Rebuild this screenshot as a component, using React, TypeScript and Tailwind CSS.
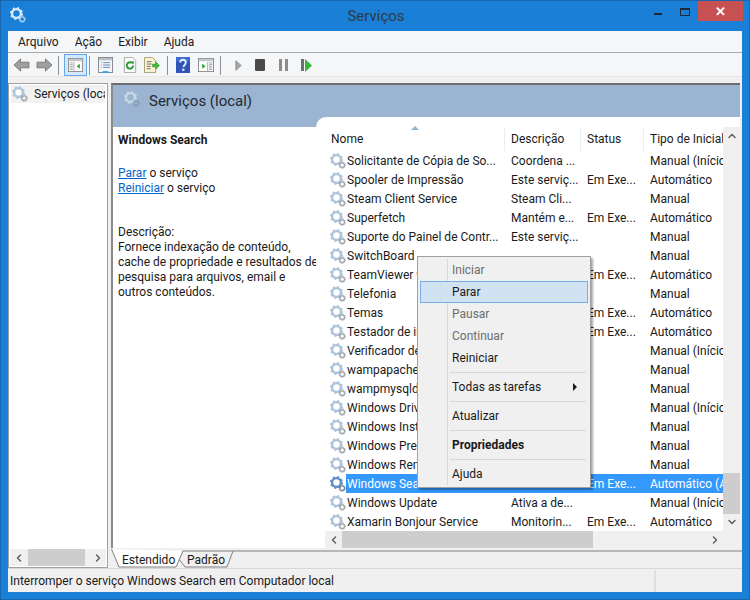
import { ChevronLeft, ChevronRight, ChevronUp, ChevronDown } from "lucide-react";

type Row = { name: string; desc?: string; status?: string; type: string; selected?: boolean };

const ROWS: Row[] = [
  { name: "Solicitante de Cópia de So...", desc: "Coordena ...", type: "Manual (Início" },
  { name: "Spooler de Impressão", desc: "Este serviç...", status: "Em Exe...", type: "Automático" },
  { name: "Steam Client Service", desc: "Steam Cli...", type: "Manual" },
  { name: "Superfetch", desc: "Mantém e...", status: "Em Exe...", type: "Automático" },
  { name: "Suporte do Painel de Contr...", desc: "Este serviç...", type: "Manual" },
  { name: "SwitchBoard", type: "Manual" },
  { name: "TeamViewer 9", status: "Em Exe...", type: "Automático" },
  { name: "Telefonia", type: "Manual" },
  { name: "Temas", status: "Em Exe...", type: "Automático" },
  { name: "Testador de instrumentação", status: "Em Exe...", type: "Automático" },
  { name: "Verificador de pontos", type: "Manual (Início" },
  { name: "wampapache", type: "Manual" },
  { name: "wampmysqld", type: "Manual" },
  { name: "Windows Driver Foundation", type: "Manual (Início" },
  { name: "Windows Installer", type: "Manual" },
  { name: "Windows Presentation", type: "Manual" },
  { name: "Windows Remote", type: "Manual" },
  { name: "Windows Search", status: "Em Exe...", type: "Automático (A", selected: true },
  { name: "Windows Update", desc: "Ativa a de...", type: "Manual (Início" },
  { name: "Xamarin Bonjour Service", desc: "Monitorin...", status: "Em Exe...", type: "Automático" },
];

function Gear({ size = 16, main = "#adc4db", inner = "#ffffff", small = "#a0a8b0" }: { size?: number; main?: string; inner?: string; small?: string }) {
  return (
    <svg width={size} height={size} viewBox="0 0 16 16" className="shrink-0">
      <circle cx="6.5" cy="6.5" r="4.4" fill="none" stroke={main} strokeWidth="2.4" />
      <circle cx="6.5" cy="6.5" r="5.7" fill="none" stroke={main} strokeWidth="1.7" strokeDasharray="2 2.48" />
      <circle cx="6.5" cy="6.5" r="2.6" fill={inner} />
      <circle cx="12.2" cy="12.2" r="2.3" fill="none" stroke={small} strokeWidth="1.3" />
      <circle cx="12.2" cy="12.2" r="3.2" fill="none" stroke={small} strokeWidth="1" strokeDasharray="1.2 1.3" />
    </svg>
  );
}

function BackArrow({ flip = false }: { flip?: boolean }) {
  return (
    <svg width="17" height="14" viewBox="0 0 18 15" className={flip ? "-scale-x-100" : ""}>
      <path d="M8 1 1 7.5 8 14V10.5H17V4.5H8Z" fill="#a0a0a0" stroke="#757575" strokeWidth="1" />
    </svg>
  );
}

function PaneIcon({ active = false }: { active?: boolean }) {
  return (
    <svg width={active ? 15 : 16} height="14" viewBox="0 0 19 17" preserveAspectRatio="none">
      <rect x="0.5" y="0.5" width="18" height="16" fill="#fff" stroke="#7c7c7c" />
      <rect x="1" y="1" width="17" height="3" fill="#c4c8cc" />
      {active ? (
        <>
          <path d="M2 6h4M2 8h4M2 10h4M2 12h4M2 14h4" stroke="#9a9a9a" />
          <path d="M7.5 5v11" stroke="#9a9a9a" />
          <path d="M15 7v6l-4-3Z" fill="#21a82f" />
        </>
      ) : (
        <>
          <path d="M13 6h4M13 8h4M13 10h4M13 12h4M13 14h4" stroke="#9a9a9a" />
          <path d="M11.5 5v11" stroke="#9a9a9a" />
          <path d="M5 7v6l4-3Z" fill="#21a82f" />
        </>
      )}
    </svg>
  );
}

function PropsIcon() {
  return (
    <svg width="15" height="16" viewBox="0 0 16 17" preserveAspectRatio="none">
      <rect x="0.5" y="0.5" width="15" height="16" fill="#f4f6f8" stroke="#80868c" />
      <rect x="1" y="1" width="14" height="2.5" fill="#b8bec4" />
      <path d="M3 6h1M5.5 6H13M3 8.5h1M5.5 8.5H13M3 11h1M5.5 11H13" stroke="#5f87b5" />
      <rect x="5" y="15" width="6" height="2" fill="#29a8e8" />
    </svg>
  );
}

function RefreshIcon() {
  return (
    <svg width="14" height="16" viewBox="0 0 16 18" preserveAspectRatio="none">
      <path d="M1.5.5H11L14.5 4V17.5H1.5Z" fill="#fbfbfb" stroke="#a3a3a3" />
      <path d="M11.5 9.5a3.6 3.6 0 1 1-1.2-2.7" fill="none" stroke="#2a9c35" strokeWidth="2.2" />
      <path d="M8.5 5.5 12.5 4.5 12 8.5Z" fill="#2a9c35" />
    </svg>
  );
}

function ExportIcon() {
  return (
    <svg width="16" height="16" viewBox="0 0 17 17">
      <path d="M.5.5H9L12.5 4V16.5H.5Z" fill="#fbf3cf" stroke="#a69c74" />
      <path d="M3 5h5M3 7.5h5M3 10h4M3 12.5h4" stroke="#6a6a6a" />
      <path d="M9 7.5h3.5V5L16.5 9 12.5 13V10.5H9Z" fill="#49b83f" stroke="#2f8f2a" strokeWidth="0.5" />
    </svg>
  );
}

function HelpIcon() {
  return (
    <svg width="14" height="16" viewBox="0 0 16 18" preserveAspectRatio="none">
      <rect width="16" height="18" fill="#2f55b8" />
      <rect x="0" y="0" width="16" height="5" fill="#3f6cd0" />
      <path d="M4.8 6.2c0-4 6.4-4 6.4 0 0 2.6-2.6 2.6-2.6 5" fill="none" stroke="#e4ecfb" strokeWidth="2.2" />
      <rect x="7.2" y="13" width="2.4" height="2.6" fill="#e4ecfb" />
    </svg>
  );
}

function Divider() {
  return <div className="h-[19px] w-px bg-[#8e9296]" />;
}

function TreePane() {
  return (
    <div className="flex w-[100px] shrink-0 flex-col border border-[#a0a0a0] bg-white">
      <div className="mx-[2px] mt-[1px] flex h-[18px] items-center gap-[6px] overflow-hidden bg-[#f2f2f2] pl-[1px]">
        <Gear size={16} />
        <span className="whitespace-nowrap text-[#1a1a1a]">Serviços (local)</span>
      </div>
      <div className="flex-1" />
      <div className="mx-[1px] mb-[1px] flex h-[17px] items-center bg-[#f0f0f0]">
        <ChevronLeft size={12} strokeWidth={3} className="ml-[3px] text-[#606060]" />
        <div className="ml-[3px] h-full w-[57px] bg-[#cdcdcd]" />
        <ChevronRight size={12} strokeWidth={3} className="ml-[7px] text-[#606060]" />
      </div>
    </div>
  );
}

function DetailPane() {
  return (
    <div className="w-[203px] shrink-0 whitespace-nowrap bg-white pl-[5px] pt-[5px] text-[#1a1a1a]">
      <div className="font-bold leading-[16px]">Windows Search</div>
      <div className="mt-[18px] leading-[15px]">
        <div>
          <span className="text-[#0066cc] underline">Parar</span> o serviço
        </div>
        <div>
          <span className="text-[#0066cc] underline">Reiniciar</span> o serviço
        </div>
      </div>
      <div className="mt-[29px] leading-[15px]">
        <div>Descrição:</div>
        <div>
          Fornece indexação de conteúdo,
          <br />
          cache de propriedade e resultados de
          <br />
          pesquisa para arquivos, email e
          <br />
          outros conteúdos.
        </div>
      </div>
    </div>
  );
}

function ServiceRow({ row }: { row: Row }) {
  return (
    <div className="flex h-[19px] items-center text-[#1a1a1a]">
      <div className="flex w-[21px] shrink-0 justify-center pl-[4px]">
        <Gear size={16} main={row.selected ? "#5a8fc4" : "#adc4db"} small={row.selected ? "#7f8a94" : "#a0a8b0"} />
      </div>
      <div className={`flex min-w-0 flex-1 items-center self-stretch ${row.selected ? "bg-[#3399ff] text-white" : ""}`}>
        <div className="w-[165px] shrink-0 overflow-hidden whitespace-nowrap pl-[1px]">{row.name}</div>
        <div className="w-[76px] shrink-0 overflow-hidden whitespace-nowrap">{row.desc}</div>
        <div className="w-[63px] shrink-0 overflow-hidden whitespace-nowrap">{row.status}</div>
        <div className="min-w-0 flex-1 overflow-hidden whitespace-nowrap">{row.type}</div>
      </div>
    </div>
  );
}

function ServiceList() {
  return (
    <div className="-mt-[10px] flex min-w-0 flex-1 flex-col rounded-tl-[10px] bg-white">
      <div className="flex min-h-0 flex-1">
        <div className="min-w-0 flex-1 pl-[9px]">
          <div className="relative mt-[10px] flex h-[24px] items-center text-[#1a1a1a]">
            <svg width="8" height="4" viewBox="0 0 8 4" className="absolute left-[86px] -top-[1px]">
              <path d="M4 0 8 4H0Z" fill="#8fb4d0" />
            </svg>
            <div className="flex h-full w-[180px] shrink-0 items-center border-r border-[#e6eef7] pl-[6px]">Nome</div>
            <div className="flex h-full w-[76px] shrink-0 items-center border-r border-[#e6eef7] pl-[6px]">Descrição</div>
            <div className="flex h-full w-[63px] shrink-0 items-center border-r border-[#e6eef7] pl-[6px]">Status</div>
            <div className="min-w-0 flex-1 overflow-hidden whitespace-nowrap pl-[6px]">Tipo de Inicial</div>
          </div>
          {ROWS.map((row) => (
            <ServiceRow key={row.name} row={row} />
          ))}
        </div>
        <div className="mt-[10px] flex w-[17px] shrink-0 flex-col items-center bg-[#f0f0f0] pt-[3px]">
          <ChevronUp size={12} strokeWidth={3} className="text-[#606060]" />
          <div className="mt-auto h-[41px] w-full bg-[#cdcdcd]" />
          <ChevronDown size={12} strokeWidth={3} className="mb-[3px] mt-[2px] text-[#606060]" />
        </div>
      </div>
      <div className="ml-[9px] flex h-[17px] shrink-0 items-center bg-[#f0f0f0]">
        <ChevronLeft size={12} strokeWidth={3} className="ml-[3px] text-[#606060]" />
        <div className="ml-[2px] h-full w-[251px] bg-[#cdcdcd]" />
        <ChevronRight size={12} strokeWidth={3} className="ml-auto mr-[19px] text-[#606060]" />
      </div>
    </div>
  );
}

function MenuItem({ label, disabled, active, bold, arrow }: { label: string; disabled?: boolean; active?: boolean; bold?: boolean; arrow?: boolean }) {
  return (
    <div className={`relative flex h-[22px] items-center pl-[32px] ${disabled ? "text-[#6d6d6d]" : "text-[#1a1a1a]"} ${bold ? "font-bold" : ""} ${active ? "border border-[#78aee5] bg-[#d1e2f2] !pl-[31px]" : ""}`}>
      {label}
      {arrow && <span className="absolute right-[11px] top-[7px] h-0 w-0 border-y-[4px] border-l-[4px] border-y-transparent border-l-[#1a1a1a]" />}
    </div>
  );
}

function MenuSeparator() {
  return <div className="my-[3px] ml-[30px] mr-[2px] h-px bg-[#d7d7d7]" />;
}

function ContextMenu() {
  return (
    <div className="absolute left-[416px] top-[255px] w-[174px] border border-[#a0a0a0] bg-[#f0f0f0] p-[2px] shadow-[2px_2px_2px_rgba(0,0,0,0.35)]">
      <div className="absolute bottom-[2px] left-[29px] top-[2px] w-px bg-[#d7d7d7]" />
      <MenuItem label="Iniciar" disabled />
      <MenuItem label="Parar" active />
      <MenuItem label="Pausar" disabled />
      <MenuItem label="Continuar" disabled />
      <MenuItem label="Reiniciar" />
      <MenuSeparator />
      <MenuItem label="Todas as tarefas" arrow />
      <MenuSeparator />
      <MenuItem label="Atualizar" />
      <MenuSeparator />
      <MenuItem label="Propriedades" bold />
      <MenuSeparator />
      <MenuItem label="Ajuda" />
    </div>
  );
}

function Tabs() {
  return (
    <div className="relative flex h-[20px] shrink-0 items-center pl-[11px] pt-[3px] text-[#1a1a1a]">
      <svg width="631" height="20" viewBox="0 0 631 20" className="absolute left-0 top-0">
        <path d="M72 3H122L116 19H74L67 10Z" fill="#f0f0f0" stroke="#808080" />
        <path d="M0.5 1 8 19H65L72 3" fill="#ffffff" stroke="#808080" />
        <path d="M122 3H631" stroke="#808080" fill="none" />
      </svg>
      <span className="relative w-[65px]">Estendido</span>
      <span className="relative">Padrão</span>
    </div>
  );
}

export default function App() {
  return (
    <div className="relative flex h-[600px] w-[750px] flex-col overflow-hidden border border-[#1667b0] bg-[#1a7fd6] px-[7px] pb-[7px] font-['Roboto',sans-serif] text-[12px]">
      <div className="flex h-[30px] shrink-0 items-start">
        <div className="flex-1 pl-[2px] pt-[6px]">
          <Gear size={16} main="#dbeafa" inner="#1a7fd6" small="#a9cdee" />
        </div>
        <div className="pt-[5px] text-center text-[15px] leading-[20px] text-[#2f3a45]">Serviços</div>
        <div className="flex flex-1 items-start justify-end">
          <div className="mt-[12px] h-[2px] w-[8px] bg-[#1f2a36]" />
          <div className="ml-[18px] mt-[7px] h-[8px] w-[10px] border border-t-2 border-[#1f2a36]" />
          <div className="-mr-[1px] ml-[8px] flex h-[20px] w-[45px] items-center justify-center bg-[#c75050] text-[13px] font-bold leading-none text-white">✕</div>
        </div>
      </div>

      <div className="flex min-h-0 flex-1 flex-col bg-[#f0f0f0]">
        <div className="flex h-[22px] shrink-0 items-center gap-[16px] border-b border-[#a9a9a9] bg-[#f5f6f7] pl-[10px] text-[#1a1a1a]">
          <span>Arquivo</span>
          <span>Ação</span>
          <span>Exibir</span>
          <span>Ajuda</span>
        </div>
        <div className="flex h-[24px] shrink-0 items-center border-b border-[#e6e6e6] bg-[#f5f6f7] pl-[5px] pt-[1px]">
          <BackArrow />
          <div className="w-[6px]" />
          <BackArrow flip />
          <div className="w-[5px]" />
          <Divider />
          <div className="ml-[5px] flex h-[22px] w-[23px] items-center justify-center border border-[#66a7e8] bg-[#d1e8ff]">
            <PaneIcon active />
          </div>
          <div className="w-[2px]" />
          <Divider />
          <div className="ml-[8px]"><PropsIcon /></div>
          <div className="ml-[10px]"><RefreshIcon /></div>
          <div className="ml-[7px]"><ExportIcon /></div>
          <div className="ml-[7px]"><Divider /></div>
          <div className="ml-[8px]"><HelpIcon /></div>
          <div className="ml-[8px]"><PaneIcon /></div>
          <div className="ml-[6px]"><Divider /></div>
          <svg width="7" height="13" viewBox="0 0 8 13" className="ml-[14px]"><path d="M1 1 7 6.5 1 12Z" fill="#a8a8a8" stroke="#8a8a8a" /></svg>
          <div className="ml-[13px] h-[12px] w-[10px] rounded-[1px] bg-[#4a4a4a]" />
          <div className="ml-[14px] flex gap-[3px]">
            <div className="h-[12px] w-[3px] bg-[#8c8c8c]" />
            <div className="h-[12px] w-[3px] bg-[#8c8c8c]" />
          </div>
          <div className="ml-[13px] flex items-center gap-[1px]">
            <div className="h-[12px] w-[3px] bg-[#6e6e6e]" />
            <svg width="7" height="13" viewBox="0 0 7 13"><path d="M0 0 7 6.5 0 13Z" fill="#35b53a" /></svg>
          </div>
        </div>

        <div className="flex min-h-0 flex-1 gap-[3px] pt-[6px]">
          <TreePane />
          <div className="flex min-w-0 flex-1 flex-col">
            <div className="mr-[2px] flex min-h-0 flex-1 flex-col border-l-2 border-t-2 border-l-[#8a8a8a] border-t-[#6e6e6e] bg-white">
              <div className="flex h-[42px] shrink-0 items-start gap-[9px] bg-[#9ab4d1] pl-[11px] pt-[6px]">
                <Gear size={16} main="#c9d8e8" inner="#9ab4d1" small="#8a9db3" />
                <span className="text-[15px] leading-[20px] text-[#1f2a36]">Serviços (local)</span>
              </div>
              <div className="flex min-h-0 flex-1">
                <DetailPane />
                <ServiceList />
              </div>
            </div>
            <Tabs />
          </div>
        </div>

        <div className="flex h-[24px] shrink-0 items-center border-t border-[#d7d7d7] pt-[1px] text-[#1a1a1a]">
          <div className="flex-1 pl-[2px]">Interromper o serviço Windows Search em Computador local</div>
          <div className="w-[88px] self-stretch border-l-2 border-[#e0e0e0]" />
        </div>
      </div>
      <ContextMenu />
    </div>
  );
}
